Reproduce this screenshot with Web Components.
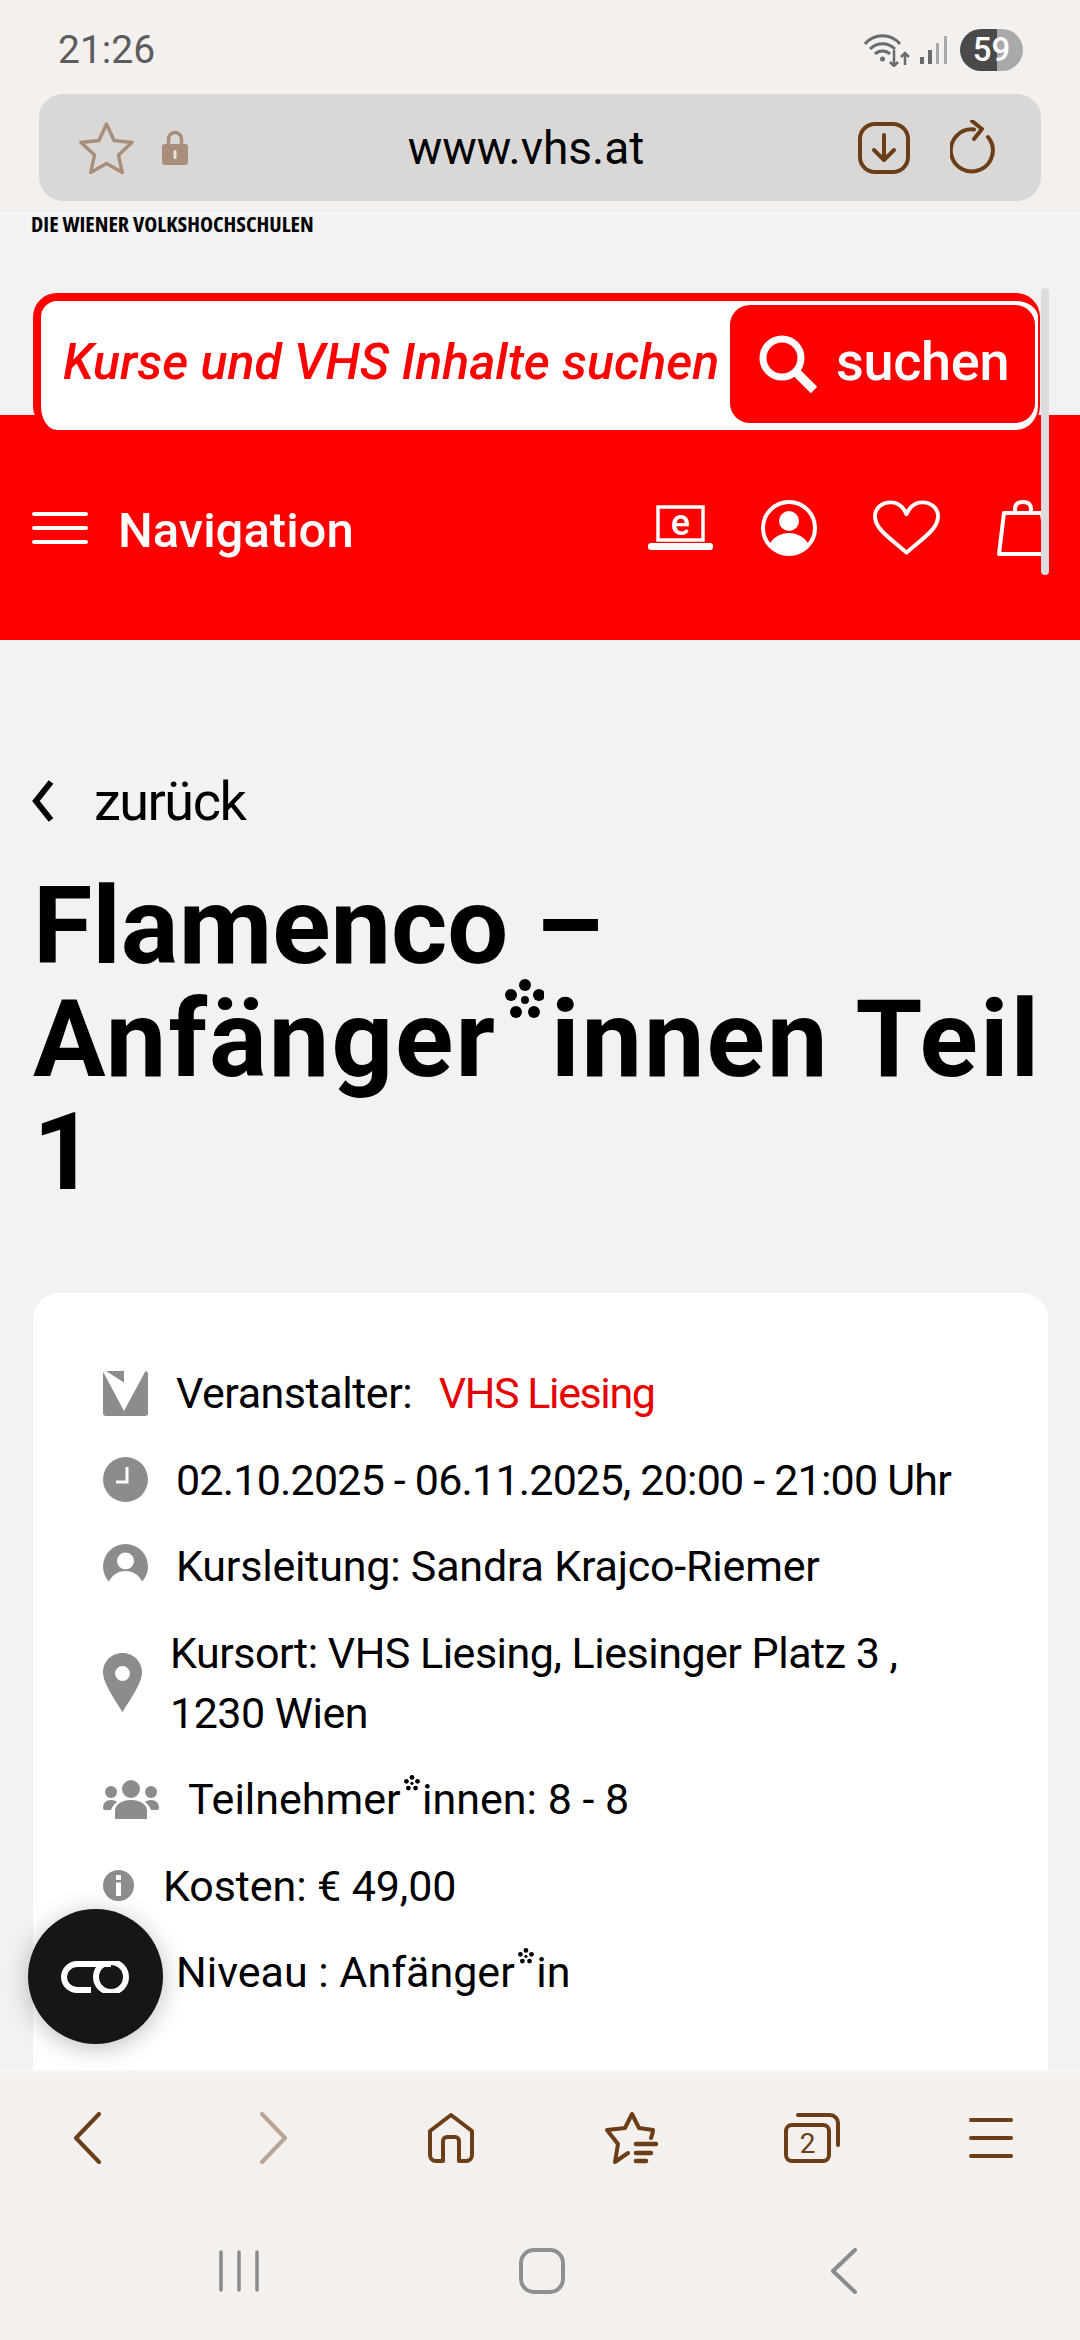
<!DOCTYPE html>
<html lang="de">
<head>
<meta charset="utf-8">
<title>Flamenco</title>
<style>
  html, body { margin: 0; padding: 0; }
  body {
    width: 1080px; height: 2340px; overflow: hidden;
    display: flex; flex-direction: column;
    background: #f2f2f2; color: #000;
    font-family: Roboto, "Open Sans", sans-serif;
    position: relative;
  }
  vhs-main { flex: 1; min-height: 0; }
</style>
</head>
<body>
<phone-status></phone-status>
<browser-bar></browser-bar>
<vhs-main>
  <vhs-header></vhs-header>
  <back-link>zurück</back-link>
  <course-title>Flamenco –<br><span style="letter-spacing:2px">Anfänger<g-star>*</g-star>innen Teil</span><br>1</course-title>
  <course-card>
    <info-row gap="28" spacing="-.45">
      <svg slot="icon" width="45" height="45" viewBox="0 0 45 45"><rect width="45" height="45" rx="3" fill="#8c8c8c"/><path fill="#fff" d="M0 0.500L21 40 42.500 0H21V11.500L3 0H0z"/></svg>
      Veranstalter:&nbsp; <red-text>VHS Liesing</red-text>
    </info-row>
    <info-row gap="28" spacing="-.8">
      <svg slot="icon" width="45" height="45" viewBox="0 0 45 45"><circle cx="22.5" cy="22.5" r="22.5" fill="#8c8c8c"/><path d="M24 10V25H13" fill="none" stroke="#fff" stroke-width="3"/></svg>
      02.10.2025 - 06.11.2025, 20:00 - 21:00 Uhr
    </info-row>
    <info-row gap="28" spacing="-.2">
      <svg slot="icon" width="45" height="45" viewBox="0 0 45 45"><circle cx="22.5" cy="22.5" r="22.5" fill="#8c8c8c"/><circle cx="22.5" cy="17" r="8.5" fill="#fff"/><path d="M5 40c3-9 10-13 17.500-13S37 31 40 40l-8 6H13z" fill="#fff"/></svg>
      Kursleitung: Sandra Krajco-Riemer
    </info-row>
    <info-row gap="28" spacing="-.5">
      <svg slot="icon" width="39" height="59" viewBox="0 0 39 59"><path fill="#8c8c8c" fill-rule="evenodd" d="M19.500 0C31 0 39 9 39 19.500 39 30 27 47 19.500 59 12 47 0 30 0 19.500 0 9 8 0 19.500 0zm0 13a7.500 7.500 0 1 0 0 15 7.500 7.500 0 0 0 0-15z"/></svg>
      Kursort: VHS Liesing, Liesinger Platz 3 ,<br>1230 Wien
    </info-row>
    <info-row gap="29" spacing="0">
      <svg slot="icon" width="56" height="39" viewBox="0 0 56 39" fill="#8c8c8c"><circle cx="28" cy="9" r="9"/><circle cx="8" cy="12" r="6"/><circle cx="48" cy="12" r="6"/><path d="M12 39V31c0-7 7-11 16-11s16 4 16 11v8z"/><path d="M0 28c0-5 3-8 8-8 3 0 5 1 6 2-3 2-5 5-6 8H1z"/><path d="M56 28c0-5-3-8-8-8-3 0-5 1-6 2 3 2 5 5 6 8h7z"/></svg>
      Teilnehmer<g-star>*</g-star>innen: 8 - 8
    </info-row>
    <info-row gap="29" spacing="-.1">
      <svg slot="icon" width="31" height="31" viewBox="0 0 31 31"><circle cx="15.500" cy="15.500" r="15.500" fill="#8c8c8c"/><path d="M13 12.500h5V26h-5zM13 5h5v5h-5z" fill="#fff"/></svg>
      Kosten: € 49,00
    </info-row>
    <info-row gap="28" spacing="0">
      <svg slot="icon" width="45" height="45" viewBox="0 0 45 45"><circle cx="22.5" cy="22.5" r="22.5" fill="#8c8c8c"/></svg>
      Niveau : Anfänger<g-star>*</g-star>in
    </info-row>
  </course-card>
</vhs-main>
<browser-toolbar></browser-toolbar>
<system-nav></system-nav>
<float-button></float-button>
<page-scrollbar></page-scrollbar>

<script>
  class PhoneStatus extends HTMLElement {
    constructor() {
      super();
      this.attachShadow({ mode: "open" }).innerHTML = `
      <style>
        :host { display: flex; align-items: center; height: 94px; box-sizing: border-box; padding: 6px 57px 0 58px; background: #f3f0ed; }
        .time { font: 400 39px Roboto, sans-serif; color: #5c5c5c; flex: 1; }
        svg { display: block; }
        .batt { position: relative; width: 63px; height: 42px; margin-left: 12px; border-radius: 21px; overflow: hidden; background: linear-gradient(90deg, #4a4a4a 0 37px, #a9a9a9 37px); color: #fff; font: 500 33px Roboto, sans-serif; text-align: center; line-height: 42px; }
      </style>
      <span class="time">21:26</span>
      <svg width="46" height="34" viewBox="0 0 46 34" fill="none" stroke="#6a6a6a" stroke-width="3">
        <path d="M1 11C10 0 27 0 36 11"/><path d="M6 16c7-7 18-7 25 0"/><path d="M11 21c4-4 11-4 15 0"/>
        <circle cx="18.500" cy="26" r="2.500" fill="#6a6a6a" stroke="none"/>
        <path stroke-width="2.500" d="M30 17V33M26 29l4 4 4-4M41 32V20M37 24l4-4 4 4"/>
      </svg>
      <svg width="30" height="30" viewBox="0 0 30 30" style="margin-left:8px"><path d="M2 22h4v7H2z" fill="#6a6a6a"/><path d="M10 15h4v14h-4z" fill="#6a6a6a"/><path d="M18 8h3v21h-3z" fill="#a9a9a9"/><path d="M26 1h3v28h-3z" fill="#a9a9a9"/></svg>
      <div class="batt">59</div>`;
    }
  }

  class BrowserBar extends HTMLElement {
    constructor() {
      super();
      this.attachShadow({ mode: "open" }).innerHTML = `
      <style>
        :host { display: block; background: #f3f0ed; padding: 0 39px 11px; border-bottom: 3px solid #f8f6f4; }
        .bar { position: relative; display: flex; align-items: center; height: 107px; border-radius: 24px; background: #d9d8d6; padding: 0 43px 0 40px; }
        .url { flex: 1; text-align: center; font: 400 46px Roboto, sans-serif; color: #000; transform: translateX(3px); }
        svg { display: block; flex: none; }
      </style>
      <div class="bar">
        <svg width="55" height="52" viewBox="0 0 55 52" fill="none" stroke="#a98f7b" stroke-width="3.500" stroke-linejoin="round"><path d="M27.500 2l7.500 16.500 18 2-13.500 12.500 3.800 17.500-15.800-9-15.800 9 3.800-17.500L2 20.500l18-2z"/></svg>
        <svg width="26" height="35" viewBox="0 0 26 35" style="margin-left:28px"><path d="M6.500 16V9a6.500 6.500 0 0 1 13 0v7" fill="none" stroke="#a98f7b" stroke-width="3.500"/><rect y="14" width="26" height="21" rx="3" fill="#a98f7b"/><rect x="11.500" y="20" width="3" height="9" rx="1.500" fill="#e8e4df"/></svg>
        <span class="url">www.vhs.at</span>
        <svg width="52" height="52" viewBox="0 0 52 52" fill="none" stroke="#6b3e17" stroke-width="4" stroke-linecap="round" stroke-linejoin="round"><rect x="2" y="2" width="48" height="48" rx="15"/><path d="M26 13V37M16 28l10 10 10-10"/></svg>
        <svg width="48" height="56" viewBox="0 0 48 56" style="margin-left:40px" fill="none" stroke="#6b3e17" stroke-width="4" stroke-linecap="round" stroke-linejoin="round"><path d="M38 17A21 21 0 1 1 24 9.500"/><path d="M22 1l10 8-8 10"/></svg>
      </div>`;
    }
  }

  class VhsHeader extends HTMLElement {
    constructor() {
      super();
      this.attachShadow({ mode: "open" }).innerHTML = `
      <style>
        :host { display: block; }
        .org { font-family: "Open Sans", sans-serif; font-size: 22px; font-weight: 700; font-stretch: 75%; line-height: 18px; margin: -1px 0 0 31px; white-space: nowrap; }
        .search { position: relative; z-index: 1; display: flex; align-items: center; box-sizing: border-box; width: 1007px; height: 137px; margin: 61px 0 -15px 33px; border: 8px solid #f00; border-width: 8px 2px 0 8px; border-radius: 24px; background: #fff; }
        .search .ph { flex: 1; font-size: 50px; font-style: italic; font-weight: 500; color: #f00; padding-left: 22px; white-space: nowrap; margin-top: -8px; }
        .go { display: flex; align-items: center; gap: 18px; box-sizing: border-box; width: 305px; height: 118px; margin: -3px 3px 0 0; padding-left: 29px; border-radius: 20px; background: #f00; color: #fff; font-size: 54px; font-weight: 500; flex: none; }
        .go span { margin-top: -6px; letter-spacing: -.3px; }
        .band { display: flex; align-items: center; height: 225px; padding: 0 0 0 32px; background: #f00; color: #fff; overflow: hidden; }
        .nav { flex: 1; margin-left: 30px; font-size: 49px; font-weight: 500; padding-top: 6px; }
        .icons { display: flex; align-items: center; width: 393px; flex: none; margin-right: 39px; overflow: hidden; }
        svg { display: block; flex: none; }
      </style>
      <div class="org">DIE WIENER VOLKSHOCHSCHULEN</div>
      <div class="search">
        <span class="ph">Kurse und VHS Inhalte suchen</span>
        <div class="go">
          <svg width="59" height="59" viewBox="0 0 59 59" fill="none" stroke="#fff"><circle cx="23" cy="23" r="19" stroke-width="7"/><path d="M36 36l19 19" stroke-width="9"/></svg>
          <span>suchen</span>
        </div>
      </div>
      <div class="band">
        <svg width="56" height="32" viewBox="0 0 56 32" fill="#fff"><rect y="0" width="56" height="4" rx="2"/><rect y="14" width="56" height="4" rx="2"/><rect y="28" width="56" height="4" rx="2"/></svg>
        <span class="nav">Navigation</span>
        <div class="icons">
          <svg width="65" height="46" viewBox="0 0 65 46" fill="none" stroke="#fff"><rect x="10" y="2" width="45" height="33" stroke-width="3.500"/><rect x="0" y="38" width="65" height="7" rx="3" fill="#fff" stroke="none"/><text x="32.500" y="30" text-anchor="middle" fill="#fff" stroke="none" font-size="36" font-family="Roboto, sans-serif" font-weight="500">e</text></svg>
          <svg style="margin-left:48px" width="56" height="56" viewBox="0 0 56 56"><circle cx="28" cy="28" r="26" fill="none" stroke="#fff" stroke-width="4"/><circle cx="28" cy="21" r="10" fill="#fff"/><path d="M8 45c4-8 12-12 20-12s16 4 20 12c-10 12-30 12-40 0z" fill="#fff"/></svg>
          <svg style="margin-left:56px" width="67" height="56" viewBox="0 0 68 56" fill="none" stroke="#fff" stroke-width="4" stroke-linejoin="round"><path d="M34 53C20 40 2 30 2 16 2 8 9 2 18 2c8 0 13 5 16 12C37 7 42 2 50 2c9 0 16 6 16 14 0 14-18 24-32 37z"/></svg>
          <svg style="margin-left:57px" width="52" height="56" viewBox="0 0 52 56" fill="none" stroke="#fff" stroke-width="4" stroke-linejoin="round"><path d="M7 13H45L50 54H2z"/><path d="M18 13V9C18 4 21 2 26 2s8 2 8 7v4"/></svg>
        </div>
      </div>`;
    }
  }

  class BackLink extends HTMLElement {
    constructor() {
      super();
      this.attachShadow({ mode: "open" }).innerHTML = `
      <style>
        :host { display: flex; align-items: center; gap: 40px; margin: 126px 0 0 32px; height: 70px; font-size: 54px; letter-spacing: -1.500px; }
        svg { display: block; flex: none; }
      </style>
      <svg width="22" height="42" viewBox="0 0 22 42" fill="none" stroke="#000" stroke-width="6"><path d="M19 2L4 21l15 19"/></svg>
      <span><slot></slot></span>`;
    }
  }

  class CourseTitle extends HTMLElement {
    constructor() {
      super();
      this.attachShadow({ mode: "open" }).innerHTML = `
      <style>
        :host { display: block; margin: 34px 0 0 33px; font-size: 108px; font-weight: 700; line-height: 113px; white-space: nowrap; }
      </style>
      <slot></slot>`;
    }
  }

  class GStar extends HTMLElement {
    constructor() {
      super();
      this.attachShadow({ mode: "open" }).innerHTML = `
      <style>
        :host { display: inline-block; position: relative; width: .5em; height: 1em; line-height: 1; letter-spacing: 0; font-weight: 400; }
        span { color: transparent; }
        svg { position: absolute; left: .07em; top: -.06em; width: .37em; height: .37em; fill: currentColor; }
      </style>
      <span><slot></slot></span>
      <svg viewBox="0 0 40 40"><circle cx="20" cy="6" r="6"/><circle cx="6" cy="16" r="6"/><circle cx="34" cy="16" r="6"/><circle cx="11" cy="33" r="6"/><circle cx="29" cy="33" r="6"/><circle cx="20" cy="21" r="4"/></svg>`;
    }
  }

  class CourseCard extends HTMLElement {
    constructor() {
      super();
      this.attachShadow({ mode: "open" }).innerHTML = `
      <style>
        :host { display: flex; flex-direction: column; gap: 26.5px; box-sizing: border-box; margin: 84px 32px 0 33px; padding: 70px 0 0 70px; height: 900px; border-radius: 26px; background: #fff; }
      </style>
      <slot></slot>`;
    }
  }

  class InfoRow extends HTMLElement {
    constructor() {
      super();
      this.attachShadow({ mode: "open" }).innerHTML = `
      <style>
        :host { display: flex; align-items: center; font-size: 43px; line-height: 60px; white-space: nowrap; }
        .ic { display: block; flex: none; }
        ::slotted(svg) { display: block; }
      </style>
      <div class="ic"><slot name="icon"></slot></div>
      <div class="tx"><slot></slot></div>`;
    }
    connectedCallback() {
      this.shadowRoot.querySelector(".ic").style.marginRight = this.getAttribute("gap") + "px";
      this.style.letterSpacing = this.getAttribute("spacing") + "px";
    }
  }

  class RedText extends HTMLElement {
    constructor() {
      super();
      this.attachShadow({ mode: "open" }).innerHTML = `<style>:host { color: #e60000; margin-left: 6px; letter-spacing: -1.400px; }</style><slot></slot>`;
    }
  }

  class BrowserToolbar extends HTMLElement {
    constructor() {
      super();
      this.attachShadow({ mode: "open" }).innerHTML = `
      <style>
        :host { display: flex; align-items: center; box-sizing: border-box; height: 137px; padding: 0 0 4px 74px; background: #f3f0ed; border-top: 3px solid #f8f6f4; }
        svg { display: block; flex: none; }
      </style>
      <svg width="27" height="52" viewBox="0 0 27 52" fill="none" stroke="#6b3e17" stroke-width="4" stroke-linecap="round" stroke-linejoin="round"><path d="M25 2L2 26l23 24"/></svg>
      <svg style="margin-left:159px" width="27" height="52" viewBox="0 0 27 52" fill="none" stroke="#b8a596" stroke-width="4" stroke-linecap="round" stroke-linejoin="round"><path d="M2 2l23 24L2 50"/></svg>
      <svg style="margin-left:141px" width="46" height="50" viewBox="0 0 46 50" fill="none" stroke="#6b3e17" stroke-width="4" stroke-linejoin="round"><path d="M23 2L44 18V42a6 6 0 0 1-6 6H31V28a4 4 0 0 0-4-4h-8a4 4 0 0 0-4 4V48H8a6 6 0 0 1-6-6V18z"/></svg>
      <svg style="margin-left:130px" width="54" height="52" viewBox="0 0 54 52" fill="none" stroke="#6b3e17" stroke-width="4" stroke-linecap="round" stroke-linejoin="round"><path d="M47 26c1-3 2-5 2-8l-14-2-7-14-7 14-18 2 11 14-3 18 13-9"/><path d="M32 32H52M32 41H47M32 49H42" stroke-width="4.500"/></svg>
      <svg style="margin-left:126px" width="56" height="50" viewBox="0 0 56 50" fill="none" stroke="#6b3e17" stroke-width="4" stroke-linecap="round" stroke-linejoin="round"><rect x="2" y="12" width="43" height="36" rx="6"/><path d="M14 2H46a8 8 0 0 1 8 8V32"/><text x="23.500" y="40" text-anchor="middle" fill="#6b3e17" stroke="none" font-size="28" font-family="Roboto, sans-serif">2</text></svg>
      <svg style="margin-left:129px" width="44" height="40" viewBox="0 0 44 40" fill="#6b3e17"><rect y="0" width="44" height="4" rx="2"/><rect y="18" width="44" height="4" rx="2"/><rect y="36" width="44" height="4" rx="2"/></svg>`;
    }
  }

  class SystemNav extends HTMLElement {
    constructor() {
      super();
      this.attachShadow({ mode: "open" }).innerHTML = `
      <style>
        :host { display: flex; align-items: center; justify-content: space-between; box-sizing: border-box; height: 133px; padding: 0 223px 5px 219px; background: #f3f0ed; }
        svg { display: block; flex: none; }
      </style>
      <svg width="40" height="42" viewBox="0 0 40 42" stroke="#8b8b8b" stroke-width="3.500" stroke-linecap="round"><path d="M2 2V40M20 2V40M38 2V40"/></svg>
      <svg style="margin-left:-6px" width="46" height="46" viewBox="0 0 46 46" fill="none" stroke="#8f8f8f" stroke-width="4"><rect x="2" y="2" width="42" height="42" rx="13"/></svg>
      <svg width="26" height="46" viewBox="0 0 26 46" fill="none" stroke="#8b8b8b" stroke-width="4" stroke-linecap="round" stroke-linejoin="round"><path d="M24 2L2 23l22 21"/></svg>`;
    }
  }

  class FloatButton extends HTMLElement {
    constructor() {
      super();
      this.attachShadow({ mode: "open" }).innerHTML = `
      <style>
        :host { position: absolute; left: 28px; top: 1909px; width: 135px; height: 135px; display: flex; align-items: center; justify-content: center; border-radius: 50%; background: #161616; box-shadow: 0 4px 24px rgba(0,0,0,.25); }
      </style>
      <svg width="70" height="32" viewBox="0 0 70 32" fill="none" stroke="#fff" stroke-width="6"><path d="M30 3H16a13 13 0 0 0 0 26H30"/><circle cx="50" cy="16" r="15" /><path d="M16 3H50"/></svg>`;
    }
  }

  class PageScrollbar extends HTMLElement {
    constructor() {
      super();
      this.attachShadow({ mode: "open" }).innerHTML = `
      <style>
        :host { position: absolute; left: 1041px; top: 288px; width: 8px; height: 287px; border-radius: 4px; background: #dcdcdc; }
      </style>`;
    }
  }

  customElements.define("phone-status", PhoneStatus);
  customElements.define("browser-bar", BrowserBar);
  customElements.define("vhs-header", VhsHeader);
  customElements.define("back-link", BackLink);
  customElements.define("course-title", CourseTitle);
  customElements.define("g-star", GStar);
  customElements.define("course-card", CourseCard);
  customElements.define("info-row", InfoRow);
  customElements.define("red-text", RedText);
  customElements.define("browser-toolbar", BrowserToolbar);
  customElements.define("system-nav", SystemNav);
  customElements.define("float-button", FloatButton);
  customElements.define("page-scrollbar", PageScrollbar);
</script>
</body>
</html>
